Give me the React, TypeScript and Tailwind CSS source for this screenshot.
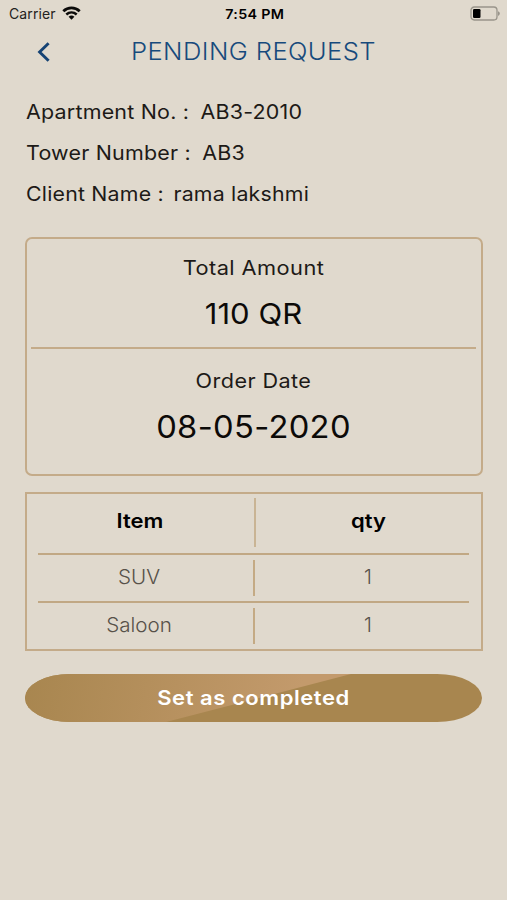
import React from 'react';

const ui = "font-['Inter','Liberation_Sans',sans-serif]";

function StatusBar() {
  return (
    <header className="grid h-7 grid-cols-3 items-center pl-[9px] pr-[7px] text-black">
      <div className="flex items-center gap-[6px]">
        <span className="text-[14px] leading-7 tracking-[0.1px] text-[#242220]">Carrier</span>
        <svg className="-mt-0.5" width="19" height="14" viewBox="0 0 19 14" fill="none" stroke="#0c0b0a">
          <path d="M1.3 5.2C6 .7 13 .7 17.7 5.2" strokeWidth="2.8" />
          <path d="M4.3 8.5C7.4 5.7 11.6 5.7 14.7 8.5" strokeWidth="2.5" />
          <path d="M6.6 10.8C8.4 9.2 10.6 9.2 12.4 10.8L9.5 13.7Z" fill="#0c0b0a" stroke="none" />
        </svg>
      </div>
      <span className="scale-x-[1.06] text-center text-[13.5px] font-semibold leading-7 tracking-[0.3px] whitespace-nowrap">7:54 PM</span>
      <svg className="-mt-[2px] justify-self-end" width="30" height="15" viewBox="0 0 30 15">
        <rect x="1" y="1" width="26" height="13" rx="3.2" fill="none" stroke="#99948a" strokeWidth="1.3" />
        <rect x="3" y="3" width="7.5" height="9" rx="1.2" fill="#000" />
        <path d="M28 5.2C30.4 6 30.4 9 28 9.8Z" fill="#99948a" />
      </svg>
    </header>
  );
}

function TitleBar() {
  return (
    <div className="grid h-[46px] grid-cols-[88px_1fr_88px] items-center">
      <svg className="ml-[36px]" width="16" height="20" viewBox="0 0 16 20" fill="none" stroke="#164374" strokeWidth="2.9">
        <path d="M12.6 1.2L3.6 10L12.6 18.8" />
      </svg>
      <h1 className="mt-px scale-x-[1.065] whitespace-nowrap text-center text-[24px] font-[350] leading-[46px] tracking-[0.4px] text-[#174a7c]">PENDING REQUEST</h1>
    </div>
  );
}

function Detail({ label, value, narrow = false }: { label: string; value: string; narrow?: boolean }) {
  return (
    <div className={`flex h-[41px] origin-left items-center whitespace-nowrap text-[20px] leading-[41px] tracking-[0.2px] text-[#1d1a17] ${narrow ? 'scale-x-[1.065] gap-[9px]' : 'scale-x-[1.072] gap-[10.5px]'}`}>
      <span>{label}</span>
      <span>{value}</span>
    </div>
  );
}

function Row({ item, qty, header = false }: { item: string; qty: string; header?: boolean }) {
  return (
    <div className={header ? 'flex h-[60px] items-start pt-1 text-[20px] leading-[49px] font-semibold text-black' : 'flex h-[46px] items-center text-[20px] font-[350] text-[#575149]'}>
      <span className={header ? 'w-[226px] scale-x-[1.1] -mt-px text-center' : 'w-[224px] mr-0.5 scale-x-[1.03] pb-[3px] text-center'}>{item}</span>
      <span className={header ? 'h-[49px] w-0.5 ml-px bg-[#c9b494]' : 'h-9 w-0.5 bg-[#c4aa84]'} />
      <span className={header ? 'flex-1 scale-x-[1.1] -mt-px text-center' : 'flex-1 pb-[3px] text-center'}>{qty}</span>
    </div>
  );
}

export default function App() {
  return (
    <main className={`h-[900px] w-[507px] overflow-hidden bg-[#e0d9cd] ${ui}`}>
      <StatusBar />
      <TitleBar />
      <section className="mt-[18px] px-[26px]">
        <Detail label="Apartment No. :" value="AB3-2010" />
        <Detail label="Tower Number :" value="AB3" />
        <Detail narrow label="Client Name :" value="rama lakshmi" />
      </section>
      <section className="ml-[25px] mr-6 mt-[22px] h-[239px] rounded-[7px] border-2 border-[#c4ab89] pl-1 pr-[5px] text-center">
        <div className="flex h-[110px] flex-col border-b-2 border-[#c4ab89] pt-[14px]">
          <span className="scale-x-[1.09] text-[20px] leading-[30px] tracking-[0.4px] text-[#1d1a17]">Total Amount</span>
          <span className="mt-[11px] scale-x-[1.07] text-[29px] leading-[40px] font-[370] text-[#0c0a08]">110 QR</span>
        </div>
        <div className="flex flex-col pt-[17px]">
          <span className="scale-x-[1.08] text-[20px] leading-[30px] tracking-[0.4px] text-[#1d1a17]">Order Date</span>
          <span className="mt-[11px] scale-x-[1.055] text-[31px] leading-[40px] tracking-[0.3px] font-[370] text-[#0c0a08]">08-05-2020</span>
        </div>
      </section>
      <section className="ml-[25px] mr-6 mt-4 h-[159px] border-2 border-[#c4ab89]">
        <Row header item="Item" qty="qty" />
        <hr className="ml-[11px] mr-3 -mt-px border-0 h-0.5 bg-[#c1a884]" />
        <Row item="SUV" qty="1" />
        <hr className="ml-[11px] mr-3 border-0 h-0.5 bg-[#c1a884]" />
        <Row item="Saloon" qty="1" />
      </section>
      <div className="px-[25px] pt-[23px]">
        <button className="relative block h-12 w-full overflow-hidden rounded-[45px/24px] bg-[#a8864f] text-[20px] font-semibold leading-[46px] text-white">
          <span className="absolute inset-0 bg-linear-[100deg] from-[#a8864f] to-[#c39a6c] to-60% [clip-path:polygon(0_0,326px_0,141px_48px,0_48px)]" />
          <span className="relative block scale-x-[1.1] tracking-[0.5px]">Set as completed</span>
        </button>
      </div>
    </main>
  );
}
